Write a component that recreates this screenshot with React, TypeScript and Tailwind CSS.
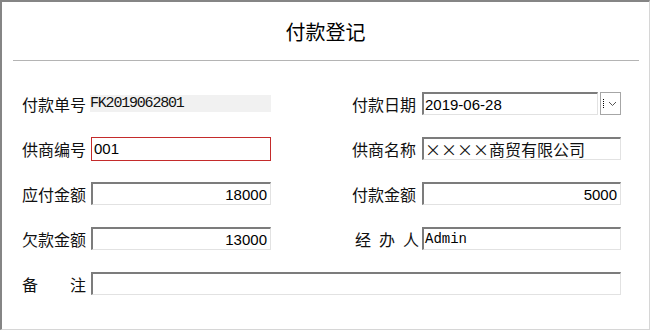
import React from "react";

const cjk = { fontFamily: '"Noto Sans CJK SC", "Noto Sans", sans-serif' };
const mono = { fontFamily: '"Liberation Mono", "Noto Sans CJK SC", monospace' };
const sans = { fontFamily: '"Liberation Sans", "Noto Sans CJK SC", sans-serif' };

function Label({ text, spread }: { text: string; spread?: boolean }) {
  if (spread) {
    return (
      <div className="w-[64px] shrink-0 flex justify-between text-[16px] text-[#111] leading-none" style={cjk}>
        {text.split("").map((c, i) => (
          <span key={i}>{c}</span>
        ))}
      </div>
    );
  }
  return (
    <div className="w-[64px] shrink-0 text-[16px] text-[#111] leading-none whitespace-nowrap" style={cjk}>
      {text}
    </div>
  );
}

function Field({
  children,
  className = "",
  right,
}: {
  children?: React.ReactNode;
  className?: string;
  right?: boolean;
}) {
  return (
    <div
      className={
        "h-[23px] flex items-center bg-white border-t-2 border-l-2 border-t-[#7c7c7c] border-l-[#7c7c7c] border-b border-r border-b-[#e2e2e2] border-r-[#e2e2e2] " +
        (right ? "justify-end pr-[3px] " : "pl-[1px] ") +
        className
      }
    >
      {children}
    </div>
  );
}

export default function App() {
  return (
    <div className="w-[650px] h-[330px] bg-white border-t-2 border-l-2 border-t-[#858585] border-l-[#858585] border-r border-b border-r-[#d6d6d6] border-b-[#d6d6d6] flex flex-col">
      <div className="h-[58px] flex items-center justify-center pt-[2px]">
        <span className="text-[20px] text-black leading-none" style={cjk}>
          付款登记
        </span>
      </div>
      <div className="h-px bg-[#b4b4b4] ml-[11px] mr-[10px]" />

      <div className="flex flex-col gap-[22px] pt-[31px]">
        {/* Row 1 */}
        <div className="flex items-center h-[23px] pl-[20px]">
          <Label text="付款单号" />
          <div className="ml-[4px] w-[181px] h-[17px] bg-[#f1f1f1] flex items-center">
            <span className="text-[15px] text-[#111] tracking-[-1.2px] leading-none" style={mono}>
              FK2019062801
            </span>
          </div>
          <div className="ml-[81px]">
            <Label text="付款日期" />
          </div>
          <Field className="ml-[6px] w-[176px]">
            <span className="text-[15px] text-black leading-none" style={sans}>
              2019-06-28
            </span>
          </Field>
          <div className="ml-[2px] w-[21px] h-[23px] border border-[#a6a6a6] bg-white flex items-center">
            <div className="ml-[2px] h-[9px] border-l border-dotted border-black" />
            <svg width="9" height="6" viewBox="0 0 9 6" className="ml-[4px]">
              <path d="M1 1 L4.5 4.5 L8 1" fill="none" stroke="#555" strokeWidth="1" />
            </svg>
          </div>
        </div>

        {/* Row 2 */}
        <div className="flex items-center h-[23px] pl-[20px]">
          <Label text="供商编号" />
          <div className="ml-[5px] w-[180px] h-[24px] border border-[#c42b2b] flex items-center pl-[2px] bg-white">
            <span className="text-[15px] text-black leading-none" style={sans}>
              001
            </span>
          </div>
          <div className="ml-[81px]">
            <Label text="供商名称" />
          </div>
          <Field className="ml-[6px] w-[199px]">
            <span className="text-[16px] text-[#111] leading-none flex" style={cjk}>
              <span className="inline-block w-[16px] text-center">×</span>
              <span className="inline-block w-[16px] text-center">×</span>
              <span className="inline-block w-[16px] text-center">×</span>
              <span className="inline-block w-[16px] text-center">×</span>
              商贸有限公司
            </span>
          </Field>
        </div>

        {/* Row 3 */}
        <div className="flex items-center h-[23px] pl-[20px]">
          <Label text="应付金额" />
          <Field className="ml-[5px] w-[180px]" right>
            <span className="text-[15px] text-black leading-none" style={sans}>
              18000
            </span>
          </Field>
          <div className="ml-[81px]">
            <Label text="付款金额" />
          </div>
          <Field className="ml-[6px] w-[199px]" right>
            <span className="text-[15px] text-black leading-none" style={sans}>
              5000
            </span>
          </Field>
        </div>

        {/* Row 4 */}
        <div className="flex items-center h-[23px] pl-[20px]">
          <Label text="欠款金额" />
          <Field className="ml-[5px] w-[180px]" right>
            <span className="text-[15px] text-black leading-none" style={sans}>
              13000
            </span>
          </Field>
          <div className="ml-[84px] w-[64px] shrink-0">
            <Label text="经办人" spread />
          </div>
          <Field className="ml-[3px] w-[199px]">
            <span className="text-[14px] text-black leading-none" style={mono}>
              Admin
            </span>
          </Field>
        </div>

        {/* Row 5 */}
        <div className="flex items-center h-[23px] pl-[20px]">
          <Label text="备注" spread />
          <Field className="ml-[5px] w-[530px]" />
        </div>
      </div>
    </div>
  );
}
